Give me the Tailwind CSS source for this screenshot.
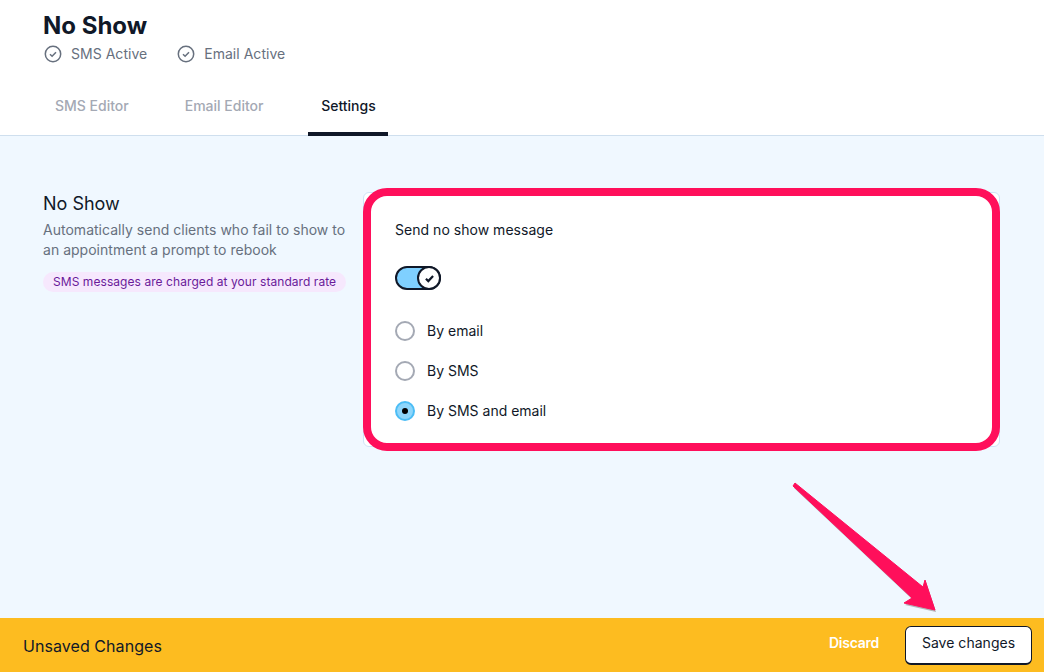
<!DOCTYPE html>
<html lang="en">
<head>
  <meta charset="UTF-8" />
  <meta name="viewport" content="width=device-width, initial-scale=1" />
  <title>No Show</title>
  <script src="https://cdn.jsdelivr.net/npm/@tailwindcss/browser@4"></script>
</head>
<body class="relative h-[672px] w-[1044px] overflow-hidden bg-[#f0f8ff] font-['Inter',sans-serif] text-[#101828]">

  <!-- header -->
  <header class="h-[136px] border-b border-[#cfdfee] bg-white px-[43px] pt-[11px]">
    <h1 class="text-2xl leading-[30px] font-bold">No Show</h1>
    <div class="mt-[3px] flex h-[20px] items-center gap-[29px] text-sm tracking-[0.03px] text-[#67707e]">
      <div class="flex items-center gap-[9px]">
        <svg class="ml-px h-[18px] w-[18px]" viewBox="0 0 18 18" fill="none" stroke="#67707e" stroke-width="1.5"><circle cx="9" cy="9" r="7.7"/><path d="M6 9.2l2.1 2.1L12 7.2"/></svg>
        <span>SMS Active</span>
      </div>
      <div class="flex items-center gap-[9px]">
        <svg class="ml-px h-[18px] w-[18px]" viewBox="0 0 18 18" fill="none" stroke="#67707e" stroke-width="1.5"><circle cx="9" cy="9" r="7.7"/><path d="M6 9.2l2.1 2.1L12 7.2"/></svg>
        <span>Email Active</span>
      </div>
    </div>
    <nav class="mt-[16px] flex text-sm font-medium">
      <div class="flex h-[56px] items-center px-3 pb-[4px] text-[#a4a9b4]">SMS Editor</div>
      <div class="ml-8 flex h-[56px] items-center px-3 pb-[4px] text-[#a4a9b4]">Email Editor</div>
      <div class="ml-[33px] flex h-[56px] w-[80px] items-center justify-center border-b-[4px] border-[#101828]">Settings</div>
    </nav>
  </header>

  <!-- settings -->
  <main class="flex px-[43px] pt-[56px]">
    <section class="w-[320px]">
      <h2 class="text-lg leading-6">No Show</h2>
      <p class="mt-[4px] text-sm leading-5 tracking-[0.02px] text-[#67707e]">Automatically send clients who fail to show to an appointment a prompt to rebook</p>
      <span class="mt-[12px] inline-block h-5 rounded-full bg-[#f6e8fd] px-[10px] text-xs leading-5 tracking-[0.065px] text-[#6a1b9a]">SMS messages are charged at your standard rate</span>
    </section>
    <section class="relative h-[255px] w-[637px] rounded-md border border-[#cfe3f7] bg-white pl-[31px] pt-[27px]">
      <div class="text-sm leading-5 tracking-[0.03px]">Send no show message</div>
      <div class="relative mt-[26px] h-6 w-[46px] rounded-full border-2 border-[#101828] bg-[#7fd0ff]">
        <div class="absolute -top-[2px] -right-[2px] flex h-6 w-6 items-center justify-center rounded-full border-2 border-[#101828] bg-white">
          <svg class="h-[13px] w-[13px]" viewBox="0 0 12 12" fill="none" stroke="#101828" stroke-width="2"><path d="M2.7 6.2l2.2 2.2 4.4-4.8"/></svg>
        </div>
      </div>
      <div class="mt-[31px] flex flex-col gap-5 text-sm">
        <label class="flex h-5 items-center gap-3">
          <span class="h-5 w-5 rounded-full border-2 border-[#a4a9b4] bg-white"></span>
          <span>By email</span>
        </label>
        <label class="flex h-5 items-center gap-3">
          <span class="h-5 w-5 rounded-full border-2 border-[#a4a9b4] bg-white"></span>
          <span>By SMS</span>
        </label>
        <label class="flex h-5 items-center gap-3">
          <span class="flex h-5 w-5 items-center justify-center rounded-full border-2 border-[#4cbdf5] bg-[#8ed6fb]"><span class="h-[6px] w-[6px] rounded-full bg-black"></span></span>
          <span>By SMS and email</span>
        </label>
      </div>
      <!-- annotation outline -->
      <div class="absolute -top-[5px] -right-[1px] -bottom-[5px] -left-[1px] rounded-[24px] border-[8px] border-[#ff0f5b]"></div>
    </section>
  </main>

  <!-- unsaved bar -->
  <footer class="absolute right-0 bottom-0 left-0 flex h-[54px] items-center justify-between bg-[#fdbc20] pr-3 pl-[23px]">
    <span class="pt-[2px] text-base tracking-[0.06px]">Unsaved Changes</span>
    <div class="mt-[8px] flex items-center gap-[26px] self-start">
      <span class="pb-[5px] text-sm font-semibold tracking-[-0.25px] text-white">Discard</span>
      <button class="h-[39px] w-[127px] rounded-md border border-b-2 border-[#101828] bg-white pb-[4px] text-sm tracking-[0.03px]">Save changes</button>
    </div>
  </footer>

  <!-- annotation arrow -->
  <svg class="absolute top-0 left-0 h-[672px] w-[1044px]" viewBox="0 0 1044 672">
    <path d="M795 483 L923 587 L925 580 L935 610 L904 603 L912 598 L793 486 Z" fill="#555555" opacity="0.4" transform="translate(1 2)"/>
    <path d="M795 483 L923 587 L925 580 L935 610 L904 603 L912 598 L793 486 Z" fill="#ff0f5b" stroke="#ff0f5b" stroke-width="1" stroke-linejoin="round"/>
  </svg>

</body>
</html>
